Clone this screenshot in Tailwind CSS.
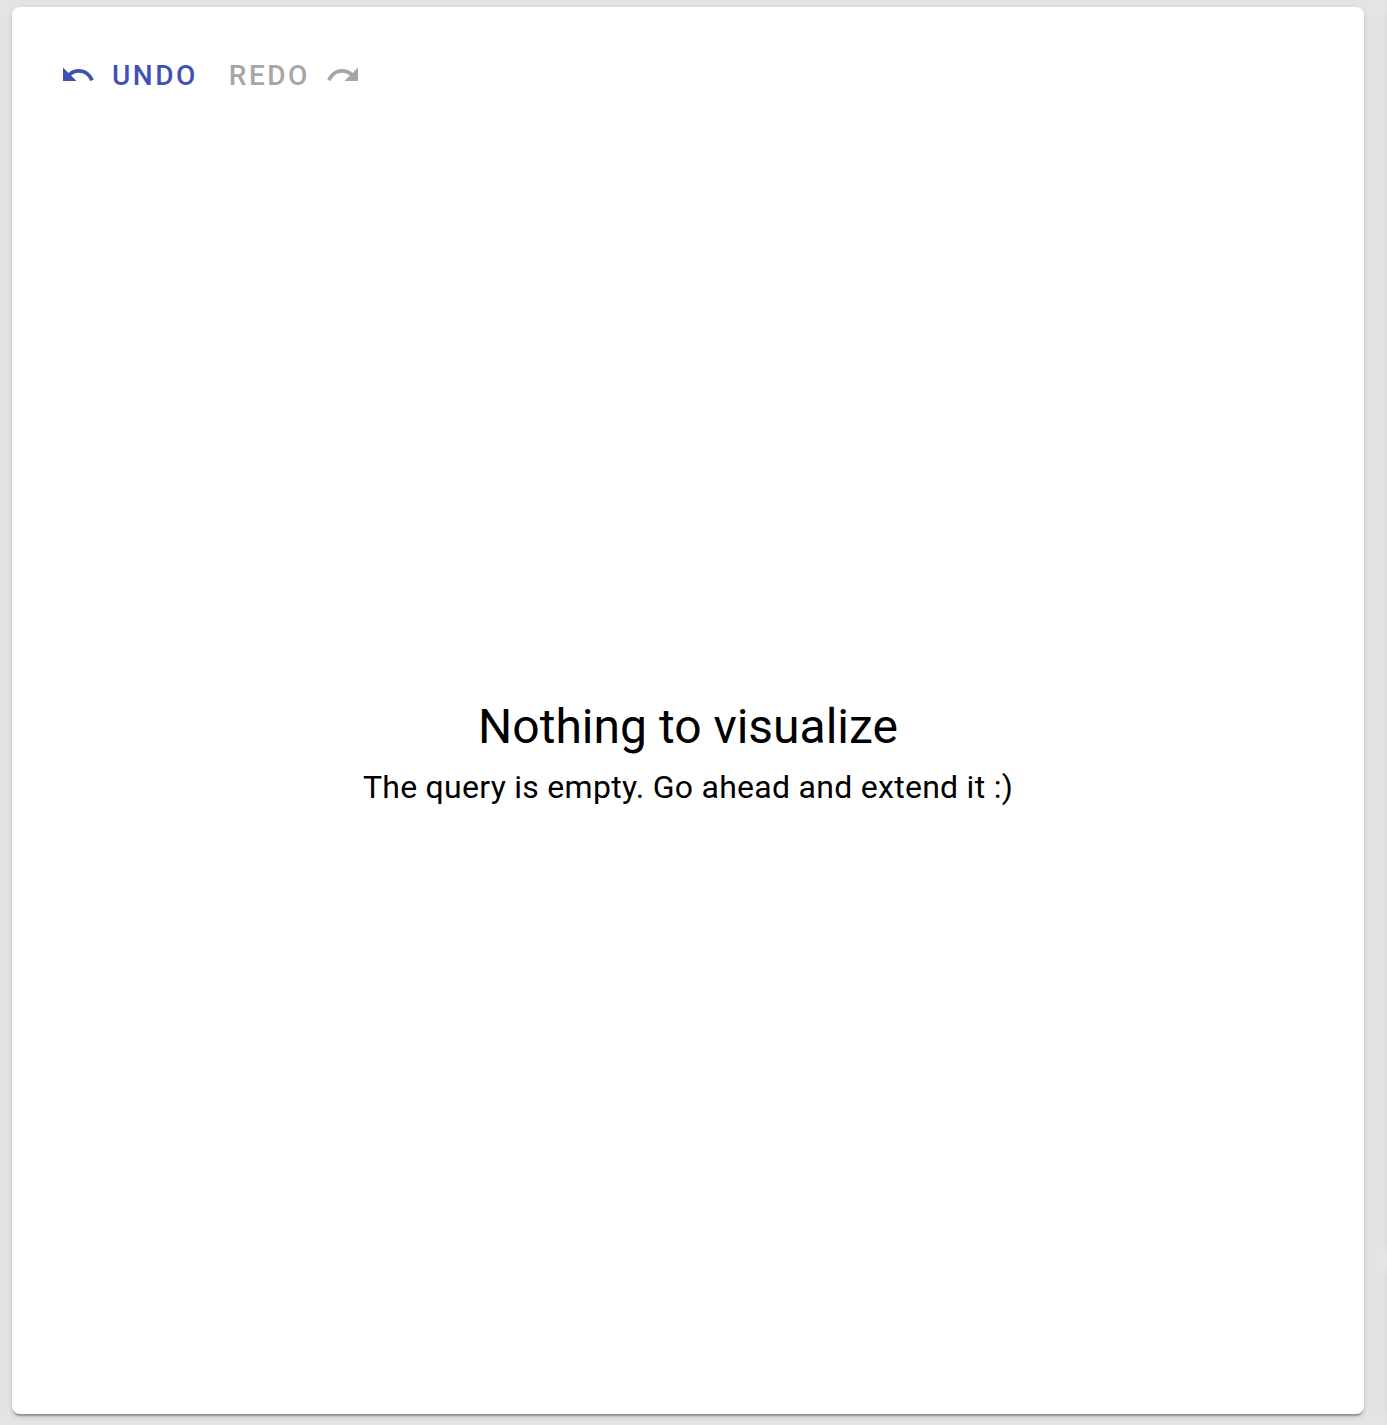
<!DOCTYPE html>
<html lang="en">
<head>
<meta charset="utf-8">
<title>Query</title>
<script src="https://cdn.jsdelivr.net/npm/@tailwindcss/browser@4"></script>
</head>
<body class="h-screen overflow-hidden bg-[#e4e4e4] font-['Roboto',sans-serif] text-black">
<div class="flex h-full gap-6 overflow-hidden pt-[7px] pb-[11px] pl-3">
  <main class="flex w-[1352px] shrink-0 flex-col rounded-lg bg-white shadow-[0_4px_2px_-2px_rgba(0,0,0,0.2),0_2px_2px_0_rgba(0,0,0,0.14),0_2px_6px_0_rgba(0,0,0,0.12)]">
    <div class="flex h-[136px] items-center gap-[31px] pl-12 text-[28px] leading-9 font-medium tracking-[2.5px]">
      <button class="flex items-center gap-4 text-[#3f51b5]">
        <svg class="size-9" viewBox="0 0 24 24" fill="currentColor"><path d="M12.5 8c-2.65 0-5.05.99-6.9 2.6L2 7v9h9l-3.62-3.62c1.39-1.16 3.16-1.88 5.12-1.88 3.54 0 6.55 2.31 7.6 5.5l2.37-.78C21.08 11.03 17.15 8 12.5 8z"/></svg>
        <span class="pt-0.5">UNDO</span>
      </button>
      <button class="flex items-center gap-[15px] text-[#a6a6a6]" disabled>
        <span class="pt-0.5">REDO</span>
        <svg class="size-9" viewBox="0 0 24 24" fill="currentColor"><path d="M18.4 10.6C16.55 8.99 14.15 8 11.5 8c-4.65 0-8.58 3.03-9.96 7.22L3.9 16c1.05-3.19 4.05-5.5 7.6-5.5 1.95 0 3.73.72 5.12 1.88L13 16h9V7l-3.6 3.6z"/></svg>
      </button>
    </div>
    <section class="flex grow flex-col items-center justify-center pb-12 text-center">
      <h1 class="text-[48px] leading-[64px]">Nothing to visualize</h1>
      <p class="text-[32px] leading-[56px] tracking-[0.28px]">The query is empty. Go ahead and extend it :)</p>
    </section>
  </main>
  <aside class="flex w-96 shrink-0 flex-col gap-4">
    <div class="h-[1243px] rounded-lg bg-white shadow-[0_4px_2px_-2px_rgba(0,0,0,0.2),0_2px_2px_0_rgba(0,0,0,0.14),0_2px_6px_0_rgba(0,0,0,0.12)]"></div>
    <div class="grow rounded-lg bg-white shadow-[0_4px_2px_-2px_rgba(0,0,0,0.2),0_2px_2px_0_rgba(0,0,0,0.14),0_2px_6px_0_rgba(0,0,0,0.12)]"></div>
  </aside>
</div>
</body>
</html>
